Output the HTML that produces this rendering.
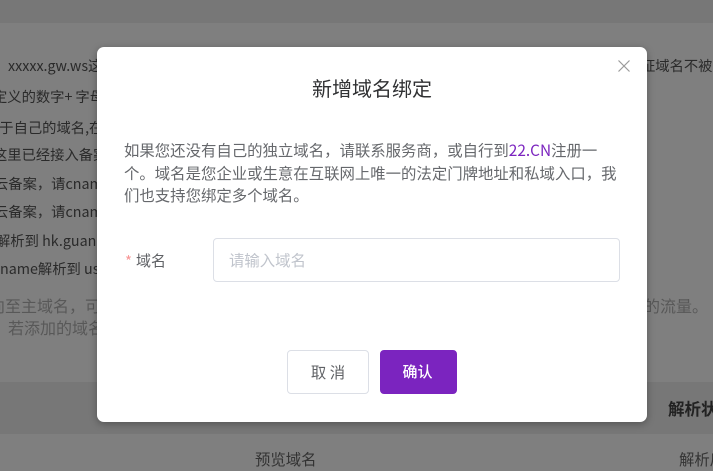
<!DOCTYPE html>
<html lang="zh">
<head>
<meta charset="utf-8">
<style>
html,body{margin:0;padding:0;width:713px;height:471px;overflow:hidden}
body{position:relative;background:#7f7f7f;font-family:"Noto Sans CJK SC","Liberation Sans",sans-serif}
.a{position:absolute;white-space:nowrap}
.b{color:#2a2a2a;font-size:14.3px;line-height:20px}
.g{color:#585858;font-size:16px;line-height:22px}
.modal{position:absolute;left:97px;top:47px;width:550px;height:375px;background:#fff;border-radius:7px;box-shadow:0 2px 8px rgba(0,0,0,.3)}
</style>
</head>
<body>
<div class="a" style="left:0;top:0;width:713px;height:23px;background:#777"></div>
<div class="a" style="left:0;top:382px;width:713px;height:52px;background:#777"></div>

<div class="a b" style="left:8px;top:56px">xxxxx.gw.ws这</div>
<div class="a b" style="left:-7px;top:87px">定义的数字<span style="letter-spacing:3px">+</span>字母</div>
<div class="a b" style="left:-15px;top:118px">属于自己的域名,在</div>
<div class="a b" style="left:-7px;top:145px">这里已经接入备案</div>
<div class="a b" style="left:-6px;top:174px">云备案，请cname</div>
<div class="a b" style="left:-6px;top:202px">云备案，请cname</div>
<div class="a b" style="left:-4px;top:231px">解析到 hk.guan</div>
<div class="a b" style="left:0;top:259px">name解析到 us</div>
<div class="a g" style="left:-11px;top:294px">向至主域名，可</div>
<div class="a g" style="left:8px;top:316px">若添加的域名</div>
<div class="a b" style="left:641px;top:56px">证域名不被劫持</div>
<div class="a g" style="left:644px;top:294px">的流量。</div>
<div class="a" style="left:668px;top:397px;font-size:16.5px;line-height:22px;font-weight:700;color:#222">解析状态</div>
<div class="a" style="left:255px;top:449px;font-size:15.4px;line-height:20px;color:#333">预览域名</div>
<div class="a" style="left:679px;top:449px;font-size:15.4px;line-height:20px;color:#333">解析后</div>

<div class="modal"></div>
<svg class="a" style="left:617px;top:59px" width="14" height="14" viewBox="0 0 14 14"><path d="M1.5 1.5L12.5 12.5M12.5 1.5L1.5 12.5" stroke="#9a9a9a" stroke-width="1.2" fill="none"/></svg>
<div class="a" style="left:97px;top:76px;width:550px;text-align:center;font-size:20px;line-height:24px;color:#303133">新增域名绑定</div>
<div class="a" style="left:124px;top:139px;width:500px;white-space:normal;font-size:15.4px;line-height:22.5px;color:#66686c">如果您还没有自己的独立域名，请联系服务商，或自行到<span style="color:#7b24bf">22.CN</span>注册一个。域名是您企业或生意在互联网上唯一的法定门牌地址和私域入口，我们也支持您绑定多个域名。</div>
<div class="a" style="left:125px;top:252px;font-size:15px;line-height:20px;color:#f89898">*</div>
<div class="a" style="left:136px;top:251px;font-size:15px;line-height:20px;color:#606266">域名</div>
<div class="a" style="left:213px;top:238px;width:405px;height:42px;border:1px solid #dcdfe6;border-radius:4px;background:#fff"></div>
<div class="a" style="left:229px;top:250px;font-size:15.4px;line-height:20px;color:#c0c4cc">请输入域名</div>
<div class="a" style="left:287px;top:350px;width:80px;height:42px;border:1px solid #dcdfe6;border-radius:4px;background:#fff;text-align:center;font-size:15.4px;line-height:43px;color:#606266">取 消</div>
<div class="a" style="left:380px;top:350px;width:77px;height:44px;border-radius:4px;background:#7b24bf;text-align:center;font-size:15px;line-height:44px;color:#fff;font-weight:500"><span style="position:relative;left:-1px">确认</span></div>
</body>
</html>
